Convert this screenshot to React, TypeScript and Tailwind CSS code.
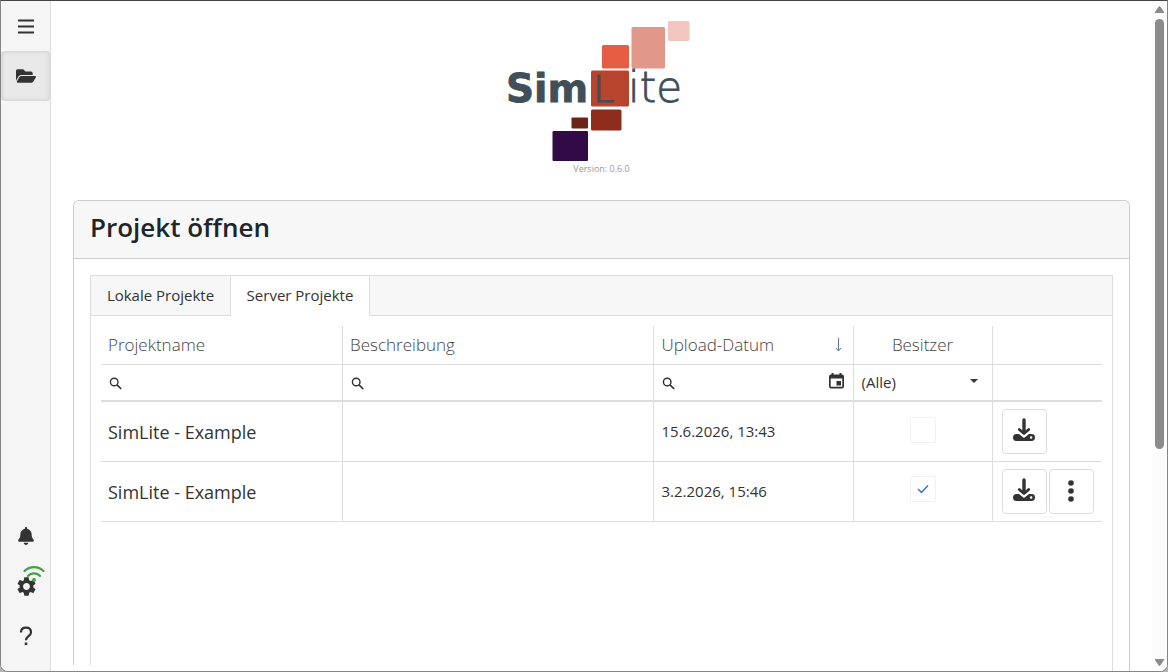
import type { ReactNode } from "react";
import { FaBell, FaFolderOpen } from "react-icons/fa";
import { MdSettings } from "react-icons/md";

const projects = [
  { id: 1, name: "SimLite - Example", description: "", uploaded: "15.6.2026, 13:43", owner: false },
  { id: 2, name: "SimLite - Example", description: "", uploaded: "3.2.2026, 15:46", owner: true },
];

function Logo() {
  return (
    <svg width="184" height="142" viewBox="506 20 184 142" role="img" aria-label="SimLite">
      <rect x="668" y="21" width="21.5" height="20" rx="1.5" fill="#f2c5be" />
      <rect x="631.5" y="27" width="33.5" height="41.5" rx="1.5" fill="#e19789" />
      <rect x="602" y="45" width="27" height="23.5" rx="1.5" fill="#e75d43" />
      <rect x="591" y="70.5" width="38" height="36" rx="1.5" fill="#b9442d" />
      <rect x="591" y="109.5" width="30.5" height="21" rx="1.5" fill="#8f2d1c" />
      <rect x="571.5" y="117.5" width="16.5" height="11" rx="1" fill="#6e2317" />
      <rect x="552.5" y="131" width="35.5" height="30" rx="1" fill="#320b46" />
      <g fill="#404f58" stroke="#404f58" fontFamily="'DejaVu Sans', sans-serif">
        <text x="506" y="102" fontSize="39" fontWeight="700" strokeWidth="0.8">Sim</text>
        <text x="593" y="102" fontSize="38" fontWeight="200" strokeWidth="1.2">L</text>
        <text x="628" y="102" fontSize="42" fontWeight="200" strokeWidth="0.8">ite</text>
      </g>
    </svg>
  );
}

function SearchIcon() {
  return (
    <svg
      width="13"
      height="13"
      viewBox="0 0 13 13"
      fill="none"
      stroke="#333"
      className="mt-0.5 shrink-0"
      aria-hidden="true"
    >
      <circle cx="5.2" cy="5" r="3.8" strokeWidth="1.4" />
      <path d="M8 7.800 12.200 12" strokeWidth="1.7" />
    </svg>
  );
}

function CalendarIcon() {
  return (
    <svg width="15" height="16" viewBox="0 0 15 16" aria-hidden="true">
      <path
        fill="#333"
        fillRule="evenodd"
        d="M2.500 0h2v1.500h6V0h2v1.500H13a2 2 0 0 1 2 2V13.500a2 2 0 0 1-2 2H2a2 2 0 0 1-2-2V3.500a2 2 0 0 1 2-2h.5zM1.700 5.500v8.300h11.600V5.500zM7.500 8H12v4.500H7.500z"
      />
    </svg>
  );
}

function DownloadIcon() {
  return (
    <svg width="22" height="24" viewBox="0 0 22 24" fill="none" aria-hidden="true">
      <path
        fill="#333"
        fillRule="evenodd"
        d="M3.500 16h2.500L11 20l5-4h2.500a3.500 3.500 0 0 1 0 7h-15a3.500 3.500 0 0 1 0-7zm14.600 2.200a1.300 1.300 0 1 0 0 2.600 1.300 1.300 0 0 0 0-2.600z"
      />
      <path d="M5.500 12 11 16.800 16.500 12" stroke="#fff" strokeWidth="4" strokeLinejoin="round" />
      <path d="M11 2v12" stroke="#333" strokeWidth="3.4" strokeLinecap="round" />
      <path
        d="M6.300 11.500 11 15.500l4.700-4"
        stroke="#333"
        strokeWidth="2.8"
        strokeLinecap="round"
        strokeLinejoin="round"
      />
    </svg>
  );
}

function DotsIcon() {
  return (
    <svg width="6" height="22" viewBox="0 0 6 22" fill="#333" aria-hidden="true">
      <circle cx="3" cy="3" r="2.8" />
      <circle cx="3" cy="11" r="2.8" />
      <circle cx="3" cy="19" r="2.8" />
    </svg>
  );
}

function WifiIcon() {
  return (
    <svg width="22" height="18" viewBox="0 0 22 18" fill="none" stroke="#43a047" aria-hidden="true">
      <path d="M1.500 6C6.500.8 15.500.8 20.500 6" strokeWidth="2.2" strokeLinecap="round" />
      <path d="M5 11c3-3.400 9-3.400 12 0" strokeWidth="2.2" strokeLinecap="round" />
      <circle cx="11" cy="15" r="2" fill="#43a047" stroke="none" />
    </svg>
  );
}

function SidebarButton({ label, active, children }: { label: string; active?: boolean; children: ReactNode }) {
  return (
    <button
      type="button"
      aria-label={label}
      className={
        active
          ? "relative flex h-[50px] w-full items-center justify-center rounded bg-[#e9e9e9] pl-px text-[#333] shadow-[inset_0_0_5px_rgba(0,0,0,0.15)]"
          : "relative flex h-[50px] w-full items-center justify-center pl-px text-[#333]"
      }
    >
      {children}
    </button>
  );
}

function Sidebar() {
  return (
    <nav className="flex w-[50px] shrink-0 flex-col border-r border-[#ddd] bg-[#f5f5f5] pb-2.5">
      <SidebarButton label="Menü">
        <svg width="18" height="16" viewBox="0 0 18 16" stroke="#333" strokeWidth="2" aria-hidden="true">
          <path d="M1 2.500h16M1 8.500h16M1 14.500h16" />
        </svg>
      </SidebarButton>
      <SidebarButton label="Projekt öffnen" active>
        <FaFolderOpen size={20} />
      </SidebarButton>
      <div className="mt-auto">
        <SidebarButton label="Benachrichtigungen">
          <FaBell size={18} />
        </SidebarButton>
        <SidebarButton label="Einstellungen">
          <MdSettings size={23} />
          <span className="absolute top-1 right-[5px]">
            <WifiIcon />
          </span>
        </SidebarButton>
        <SidebarButton label="Hilfe">
          <svg width="14" height="20" viewBox="0 0 14 20" fill="none" aria-hidden="true">
            <path
              d="M2 6.500C2 3.500 4 1.700 7 1.700s5 1.800 5 4.500c0 3.800-5 4-5 8"
              stroke="#333"
              strokeWidth="2.2"
            />
            <rect x="5.7" y="16.5" width="2.6" height="2.6" fill="#333" />
          </svg>
        </SidebarButton>
      </div>
    </nav>
  );
}

function ProjectTable() {
  return (
    <table className="w-full table-fixed border-collapse text-left text-[#333]">
      <colgroup>
        <col className="w-[24.2%]" />
        <col className="w-[31.1%]" />
        <col className="w-[200px]" />
        <col className="w-[139px]" />
        <col className="w-[110px]" />
      </colgroup>
      <thead>
        <tr className="h-[38px] border-b border-[#ddd] text-[17px] text-[#444]">
          <th className="border-r border-[#ddd] px-[7px] font-light">Projektname</th>
          <th className="border-r border-[#ddd] px-[7px] font-light">Beschreibung</th>
          <th className="border-r border-[#ddd] px-2 font-light" aria-sort="descending">
            <div className="flex items-center justify-between">
              Upload-Datum
              <svg width="14" height="16" viewBox="0 0 14 16" fill="none" stroke="#5f7396" aria-hidden="true">
                <path d="M7.500 1v12.500M5 11l2.500 3L10 11" />
              </svg>
            </div>
          </th>
          <th className="border-r border-[#ddd] px-[7px] text-center font-light">Besitzer</th>
          <td />
        </tr>
        <tr className="h-[37px] border-b-2 border-[#ddd] text-[15px]">
          <td className="border-r border-[#ddd] px-2">
            <label className="flex items-center gap-2">
              <SearchIcon />
              <input type="text" aria-label="Projektname filtern" className="w-full min-w-0 outline-none" />
            </label>
          </td>
          <td className="border-r border-[#ddd] px-2">
            <label className="flex items-center gap-2">
              <SearchIcon />
              <input type="text" aria-label="Beschreibung filtern" className="w-full min-w-0 outline-none" />
            </label>
          </td>
          <td className="border-r border-[#ddd] px-2">
            <div className="flex items-center gap-2">
              <SearchIcon />
              <input type="text" aria-label="Upload-Datum filtern" className="w-full min-w-0 outline-none" />
              <button type="button" aria-label="Datum wählen" className="mr-px mb-0.5 shrink-0">
                <CalendarIcon />
              </button>
            </div>
          </td>
          <td className="border-r border-[#ddd] px-2">
            <div className="relative">
              <select aria-label="Besitzer filtern" className="w-full appearance-none outline-none">
                <option>(Alle)</option>
                <option>Ja</option>
                <option>Nein</option>
              </select>
              <span className="pointer-events-none absolute top-2 right-1.5 border-x-4 border-t-4 border-x-transparent border-t-[#333]" />
            </div>
          </td>
          <td />
        </tr>
      </thead>
      <tbody>
        {projects.map((project) => (
          <tr key={project.id} className="h-[60px] border-b border-[#ddd]">
            <td className="border-r border-[#ddd] px-[7px] pt-0.5 text-lg">{project.name}</td>
            <td className="border-r border-[#ddd] px-[7px] pt-0.5 text-lg">{project.description}</td>
            <td className="border-r border-[#ddd] px-2 text-[15px]">{project.uploaded}</td>
            <td className="border-r border-[#ddd] pb-1 text-center">
              <label className="relative inline-flex align-middle">
                <input
                  type="checkbox"
                  aria-label="Besitzer"
                  defaultChecked={project.owner}
                  className="peer size-[26px] appearance-none rounded-xs border border-[#f1f1f1]"
                />
                <svg
                  viewBox="0 0 26 26"
                  className="pointer-events-none absolute inset-0 hidden size-[26px] peer-checked:block"
                  aria-hidden="true"
                >
                  <path d="M8 13l3.500 3.500L18 9.500" fill="none" stroke="#337ab7" strokeWidth="1.5" />
                </svg>
              </label>
            </td>
            <td className="pl-[9px]">
              <div className="flex gap-0.5">
                <button
                  type="button"
                  aria-label="Herunterladen"
                  className="flex size-[45px] items-center justify-center rounded border border-[#ddd] pb-0.5"
                >
                  <DownloadIcon />
                </button>
                {project.owner && (
                  <button
                    type="button"
                    aria-label="Weitere Aktionen"
                    className="flex size-[45px] items-center justify-center rounded border border-[#ddd]"
                  >
                    <DotsIcon />
                  </button>
                )}
              </div>
            </td>
          </tr>
        ))}
      </tbody>
    </table>
  );
}

export default function App() {
  return (
    <div className="h-screen bg-[#b5b5b5] font-['Open_Sans','Noto_Sans',sans-serif]">
      <div className="flex h-full overflow-hidden rounded-b-lg border border-[#858585] border-t-[#444] bg-white">
        <Sidebar />
        <main className="relative flex min-w-0 flex-1 flex-col overflow-hidden px-[22px] pt-[19px]">
          <header className="flex shrink-0 flex-col items-center pr-2">
            <Logo />
            <p className="pl-2 text-[9px] leading-[14px] text-[#999]">Version: 0.6.0</p>
          </header>

          <section className="mt-6 flex flex-1 flex-col rounded-t-md border border-b-0 border-[#ccc]">
            <h1 className="h-[58px] rounded-t-md border-b border-[#ccc] bg-[#f7f7f7] px-4 pt-1.5 text-[26px] leading-10 font-semibold text-[#212529]">
              Projekt öffnen
            </h1>
            <div className="flex flex-1 flex-col px-4 pt-4">
              <div className="flex flex-1 flex-col border border-b-0 border-[#ddd]">
                {/* Tabs */}
                <div role="tablist" className="flex h-10 bg-[#f7f7f7] text-[15px] text-[#333]">
                  <button
                    type="button"
                    role="tab"
                    aria-selected="false"
                    className="w-[140px] border-r border-b border-[#ddd]"
                  >
                    Lokale Projekte
                  </button>
                  <button
                    type="button"
                    role="tab"
                    aria-selected="true"
                    className="w-[139px] border-r border-b border-r-[#ddd] border-b-white bg-white"
                  >
                    Server Projekte
                  </button>
                  <div className="flex-1 border-b border-[#ddd]" />
                </div>
                <div role="tabpanel" className="px-2.5 pt-2.5">
                  <ProjectTable />
                </div>
              </div>
            </div>
          </section>

          <div className="absolute bottom-0 left-0 h-1.5 w-1/2 bg-white" />
        </main>

        {/* Scrollbar */}
        <div className="flex w-[15px] shrink-0 flex-col items-center bg-[#fcfcfc] py-[5px]" aria-hidden="true">
          <svg width="9" height="7" viewBox="0 0 9 7" fill="#8b8b8b">
            <path d="M4.500 0 Q5.200 0 9 6 V7 H0 V6 Q3.800 0 4.500 0z" />
          </svg>
          <div className="mt-1.5 h-[430px] w-[9px] rounded-full bg-[#8b8b8b]" />
          <svg width="9" height="7" viewBox="0 0 9 7" fill="#8b8b8b" className="mt-auto">
            <path d="M4.500 7 Q5.200 7 9 1 V0 H0 V1 Q3.800 7 4.500 7z" />
          </svg>
        </div>
      </div>
    </div>
  );
}
